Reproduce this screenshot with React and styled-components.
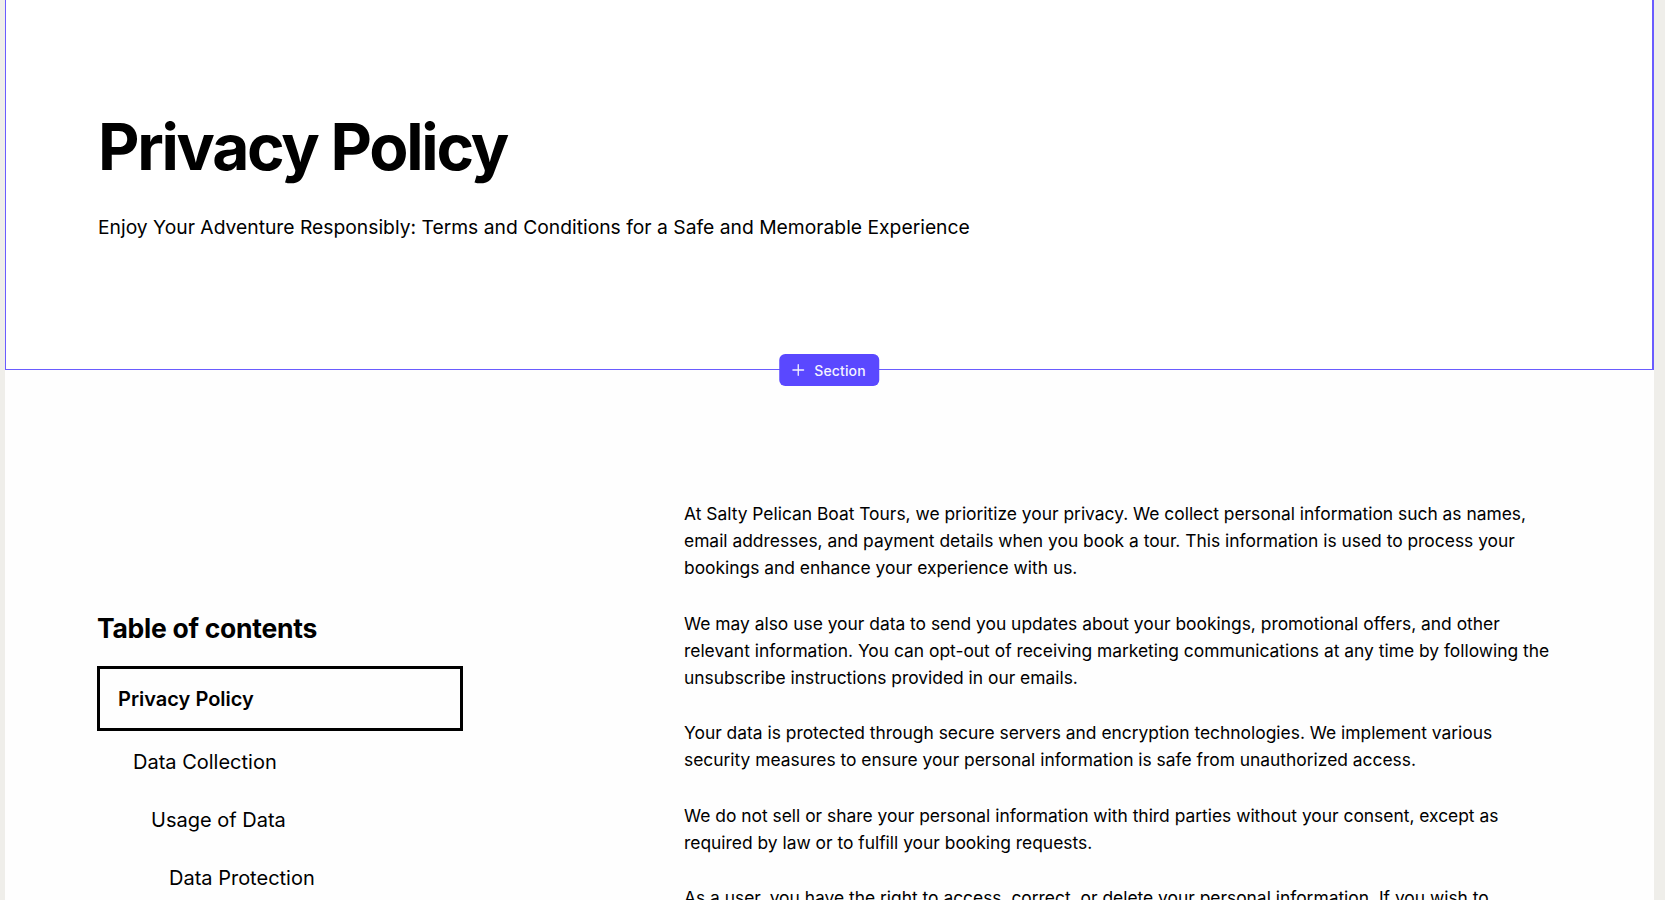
import React from 'react';
import styled, { createGlobalStyle } from 'styled-components';

const GlobalStyle = createGlobalStyle`
  html, body {
    margin: 0;
    padding: 0;
    background: #efeeea;
    font-family: Inter, "Noto Sans", sans-serif;
    color: #000;
  }
`;

const Frame = styled.div`
  margin: 0 11px 0 5px;
  min-height: 900px;
  background: #fefefe;
  overflow: hidden;
`;

const Hero = styled.section`
  position: relative;
  height: 370px;
  box-sizing: border-box;
  padding: 108px 92px 0;
  background: #fff;
  border: 1px solid #6a5cff;
  border-top: none;
  border-right-width: 2px;
`;

const Title = styled.h1`
  margin: 0;
  font-size: 64px;
  line-height: 77px;
  font-weight: 700;
  letter-spacing: -0.035em;
`;

const Subtitle = styled.p`
  margin: 28px 0 0;
  font-size: 19.3px;
  line-height: 28px;
  font-weight: 400;
`;

const AddSection = styled.button`
  position: absolute;
  left: 50%;
  bottom: -17px;
  transform: translateX(-50%);
  display: flex;
  align-items: center;
  gap: 8px;
  height: 32px;
  padding: 0 13px 0 11px;
  border: none;
  border-radius: 6px;
  background: #5a48ff;
  color: #f4f2ff;
  font-family: Inter, sans-serif;
  font-size: 14px;
  font-weight: 500;
  letter-spacing: 0.01em;
  z-index: 2;
`;

const Content = styled.section`
  display: grid;
  grid-template-columns: 491px 1fr;
  column-gap: 96px;
  padding: 130px 92px 0;
`;

const Toc = styled.nav`
  padding-top: 113px;
`;

const TocHeading = styled.h2`
  margin: 0 0 22px;
  font-size: 26.5px;
  line-height: 31px;
  font-weight: 700;
  letter-spacing: -0.01em;
`;

const TocList = styled.ul`
  list-style: none;
  margin: 0;
  padding: 0;
  width: 366px;
`;

const TocItem = styled.li`
  box-sizing: border-box;
  height: ${p => (p.$active ? '65px' : '58px')};
  margin-bottom: ${p => (p.$active ? '2px' : '0')};
  display: flex;
  align-items: center;
  padding-left: ${p => (p.$active ? 18 : 36 + p.$level * 18)}px;
  border: ${p => (p.$active ? '3px solid #000' : 'none')};
  font-size: 20px;
  font-weight: ${p => (p.$active ? 600 : 400)};
`;

const Body = styled.div`
  max-width: 876px;
`;

const Para = styled.p`
  margin: 0 0 28px;
  font-size: 17.4px;
  line-height: 27.2px;
`;

const Plus = () => (
  <svg width="16" height="16" viewBox="0 0 24 24" fill="none" stroke="currentColor" strokeWidth="2" strokeLinecap="round">
    <path d="M12 4v16M4 12h16" />
  </svg>
);

const tocItems = ['Data Collection', 'Usage of Data', 'Data Protection', 'Your Rights'];

const paragraphs = [
  'At Salty Pelican Boat Tours, we prioritize your privacy. We collect personal information such as names, email addresses, and payment details when you book a tour. This information is used to process your bookings and enhance your experience with us.',
  'We may also use your data to send you updates about your bookings, promotional offers, and other relevant information. You can opt-out of receiving marketing communications at any time by following the unsubscribe instructions provided in our emails.',
  'Your data is protected through secure servers and encryption technologies. We implement various security measures to ensure your personal information is safe from unauthorized access.',
  'We do not sell or share your personal information with third parties without your consent, except as required by law or to fulfill your booking requests.',
  'As a user, you have the right to access, correct, or delete your personal information. If you wish to exercise these rights, please contact us and we will respond to your request promptly.',
];

export default function App() {
  return (
    <>
      <GlobalStyle />
      <Frame>
        <Hero>
          <Title>Privacy Policy</Title>
          <Subtitle>
            Enjoy Your Adventure Responsibly: Terms and Conditions for a Safe and Memorable Experience
          </Subtitle>
          <AddSection>
            <Plus />
            Section
          </AddSection>
        </Hero>
        <Content>
          <Toc>
            <TocHeading>Table of contents</TocHeading>
            <TocList>
              <TocItem $active>Privacy Policy</TocItem>
              {tocItems.map((t, i) => (
                <TocItem key={t} $level={i}>{t}</TocItem>
              ))}
            </TocList>
          </Toc>
          <Body>
            {paragraphs.map((p, i) => (
              <Para key={i}>{p}</Para>
            ))}
          </Body>
        </Content>
      </Frame>
    </>
  );
}
